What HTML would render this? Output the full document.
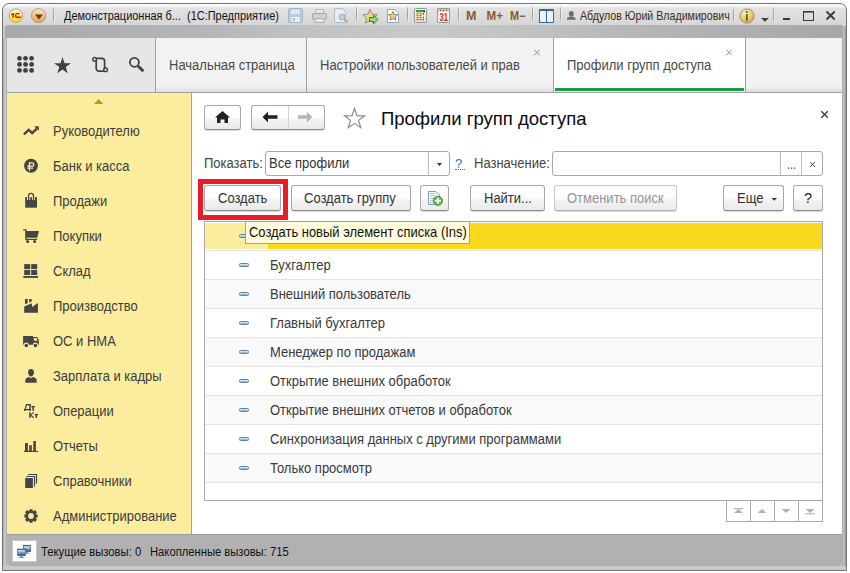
<!DOCTYPE html>
<html><head><meta charset="utf-8">
<style>
*{box-sizing:border-box;margin:0;padding:0}
html,body{width:850px;height:573px;overflow:hidden;background:#fff}
body{position:relative;font-family:"Liberation Sans",sans-serif;color:#333}
.a{position:absolute}
.t{position:absolute;white-space:nowrap;line-height:1;transform-origin:0 0}
#win{left:2px;top:3px;width:845px;height:568px;border:1px solid #737373;border-radius:7px 7px 0 0;
 background:linear-gradient(#fcfcfc 0,#f6f6f6 2px,#e2e2e2 4.5px,#dedede 10px,#d6d6d6 21px,#c9c9c9 22px,#c9c9c9 100%)}
#band{left:5px;top:25px;width:837px;height:13px;border-radius:3px 0 0 0;background:linear-gradient(90deg,#a8a9ac 0,#b4b5b7 195px,#c0c1c2 295px,#c9c9c9 420px,#c0c1c2 525px,#b5b6b8 630px,#adaeb0 745px,#a6a7aa 839px)}
#tools{left:7px;top:38px;width:149px;height:55px;background:#e6e6e6;border-right:1px solid #a0a0a0;border-bottom:1px solid #a0a0a0}
.tab{top:38px;height:55px;background:linear-gradient(#f2f2f2 0,#f2f2f2 48px,#dedede 54px);border-right:1px solid #a0a0a0;border-bottom:1px solid #a0a0a0}
#side{left:7px;top:93px;width:185px;height:441px;background:#fbec9e;border-right:1px solid #c6a725}
#content{left:192px;top:93px;width:650px;height:441px;background:#fff}
#status{left:7px;top:534px;width:835px;height:32px;background:#b1b1b1;border-top:1px solid #9c9c9c;border-bottom:1px solid #acacac;border-radius:0 0 4px 4px}
.btn{height:26px;border:1px solid #a9a9a9;border-bottom-color:#8c8c8c;border-radius:3px;background:linear-gradient(#fff 0,#fdfdfd 50%,#f3f3f3 58%,#eaeaea 100%);box-shadow:0 1px 0 rgba(0,0,0,.14)}
.row{left:205px;width:617px;height:29px;border-top:1px solid #e3e3e3}
.minus{left:239px;width:10px;height:4px;border-radius:1.5px;background:linear-gradient(#e4f2fb,#b4cde0 60%,#7d9cb6);border:1px solid #5f82a2}
</style></head><body>
<div id="win" class="a"></div>
<div id="band" class="a"></div>
<div class="a" style="left:3px;top:38px;width:4px;height:528px;background:linear-gradient(90deg,#9a9a9a,#cbcbcb 35%,#c3c3c3 65%,#a8a8ac)"></div>
<div class="a" style="left:842px;top:26px;width:4px;height:540px;background:linear-gradient(90deg,#a6a6a6,#bdbdbd 35%,#b6b6b6 65%,#8e8e8e)"></div>
<div class="t" style="left:64px;top:10px;font-size:12.3px;color:#111;transform:scaleX(0.891);">Демонстрационная б...&nbsp; (1С:Предприятие)</div>
<div class="t" style="left:579.5px;top:10px;font-size:12.3px;color:#3e2c14;transform:scaleX(0.864);">Абдулов Юрий Владимирович</div>
<div id="tools" class="a"></div>
<div class="tab a" style="left:156px;width:151px"></div>
<div class="tab a" style="left:307px;width:247px"></div>
<div class="tab a" style="left:554px;width:192px;background:#fff"></div>
<div class="tab a" style="left:746px;width:96px;border-right:0"></div>
<div class="a" style="left:555px;top:88px;width:189px;height:3px;background:#1a9b48"></div>
<div class="t" style="left:169px;top:59px;font-size:13.78px;color:#4a4a4a;transform:scaleX(0.9434);">Начальная страница</div>
<div class="t" style="left:320px;top:59px;font-size:13.78px;color:#4a4a4a;transform:scaleX(0.9434);">Настройки пользователей и прав</div>
<div class="t" style="left:567px;top:59px;font-size:13.78px;color:#4a4a4a;transform:scaleX(0.9434);">Профили групп доступа</div>
<div id="side" class="a"></div>
<div class="t" style="left:53px;top:125px;font-size:13.78px;color:#3d3d3d;transform:scaleX(0.9434);">Руководителю</div>
<div class="t" style="left:53px;top:160px;font-size:13.78px;color:#3d3d3d;transform:scaleX(0.9434);">Банк и касса</div>
<div class="t" style="left:53px;top:195px;font-size:13.78px;color:#3d3d3d;transform:scaleX(0.9434);">Продажи</div>
<div class="t" style="left:53px;top:230px;font-size:13.78px;color:#3d3d3d;transform:scaleX(0.9434);">Покупки</div>
<div class="t" style="left:53px;top:265px;font-size:13.78px;color:#3d3d3d;transform:scaleX(0.9434);">Склад</div>
<div class="t" style="left:53px;top:300px;font-size:13.78px;color:#3d3d3d;transform:scaleX(0.9434);">Производство</div>
<div class="t" style="left:53px;top:335px;font-size:13.78px;color:#3d3d3d;transform:scaleX(0.9434);">ОС и НМА</div>
<div class="t" style="left:53px;top:370px;font-size:13.78px;color:#3d3d3d;transform:scaleX(0.9434);">Зарплата и кадры</div>
<div class="t" style="left:53px;top:405px;font-size:13.78px;color:#3d3d3d;transform:scaleX(0.9434);">Операции</div>
<div class="t" style="left:53px;top:440px;font-size:13.78px;color:#3d3d3d;transform:scaleX(0.9434);">Отчеты</div>
<div class="t" style="left:53px;top:475px;font-size:13.78px;color:#3d3d3d;transform:scaleX(0.9434);">Справочники</div>
<div class="t" style="left:53px;top:510px;font-size:13.78px;color:#3d3d3d;transform:scaleX(0.9434);">Администрирование</div>
<div id="content" class="a"></div>
<div id="status" class="a"></div>
<div class="a" style="left:12px;top:540px;width:25px;height:22px;background:#fff;border:1px solid #c8c8c8"></div>
<div class="t" style="left:40.5px;top:546px;font-size:12.3px;color:#111;transform:scaleX(0.917);">Текущие вызовы: 0</div>
<div class="t" style="left:150px;top:546px;font-size:12.3px;color:#111;transform:scaleX(0.913);">Накопленные вызовы: 715</div>
<div class="btn a" style="left:204px;top:105px;width:37px;height:25px"></div>
<div class="btn a" style="left:251px;top:105px;width:74px;height:25px"></div>
<div class="a" style="left:288px;top:106px;width:1px;height:23px;background:#d2d2d2"></div>
<div class="t" style="left:381px;top:110px;font-size:18.50px;color:#0a0a0a;">Профили групп доступа</div>
<div class="t" style="left:204px;top:157px;font-size:13.78px;color:#444;transform:scaleX(0.9434);">Показать:</div>
<div class="a" style="left:265px;top:151px;width:185px;height:25px;border:1px solid #a9a9a9;border-radius:3px;background:#fff"></div>
<div class="a" style="left:428px;top:152px;width:1px;height:23px;background:#bdbdbd"></div>
<div class="t" style="left:269px;top:157px;font-size:13.78px;color:#333;transform:scaleX(0.9434);">Все профили</div>
<div class="t" style="left:455px;top:157px;font-size:13.00px;color:#1a79c2;">?</div>
<div class="a" style="left:455px;top:169px;width:10px;height:0;border-top:1px dotted #1a79c2"></div>
<div class="t" style="left:474px;top:157px;font-size:13.78px;color:#444;transform:scaleX(0.9434);">Назначение:</div>
<div class="a" style="left:552px;top:151px;width:271px;height:25px;border:1px solid #a9a9a9;border-radius:3px;background:#fff"></div>
<div class="a" style="left:780px;top:152px;width:1px;height:23px;background:#bdbdbd"></div>
<div class="a" style="left:801px;top:152px;width:1px;height:23px;background:#bdbdbd"></div>
<div class="a" style="left:198px;top:179px;width:90px;height:41px;border:5px solid #ec1c24"></div>
<div class="btn a" style="left:204px;top:185px;width:77px;"></div>
<div class="t" style="left:218px;top:192px;font-size:13.78px;color:#333;transform:scaleX(0.9434);">Создать</div>
<div class="btn a" style="left:291px;top:185px;width:120px;"></div>
<div class="t" style="left:304px;top:192px;font-size:13.78px;color:#333;transform:scaleX(0.9434);">Создать группу</div>
<div class="btn a" style="left:420px;top:185px;width:29px;"></div>
<div class="btn a" style="left:470px;top:185px;width:75px;"></div>
<div class="t" style="left:484px;top:192px;font-size:13.78px;color:#333;transform:scaleX(0.9434);">Найти...</div>
<div class="btn a" style="left:554px;top:185px;width:123px;border-color:#c6c6c6;border-bottom-color:#b0b0b0"></div>
<div class="t" style="left:567px;top:192px;font-size:13.78px;color:#959595;transform:scaleX(0.9434);">Отменить поиск</div>
<div class="btn a" style="left:723px;top:185px;width:61px;"></div>
<div class="t" style="left:737px;top:192px;font-size:13.78px;color:#333;transform:scaleX(0.9434);">Еще</div>
<div class="btn a" style="left:793px;top:185px;width:30px;"></div>
<div class="t" style="left:804px;top:191px;font-size:14.50px;color:#222;">?</div>
<div class="a" style="left:204px;top:221px;width:619px;height:280px;border:1px solid #a8a8a8;background:#fff"></div>
<div class="a" style="left:205px;top:223px;width:617px;height:26px;background:#fad81e"></div>
<div class="a" style="left:205px;top:223px;width:63px;height:26px;background:#fbec9e"></div>
<div class="row a" style="top:250px;height:29px;background:#fff"></div>
<div class="row a" style="top:279px;height:29px;background:#f9f9f9"></div>
<div class="row a" style="top:308px;height:29px;background:#fff"></div>
<div class="row a" style="top:337px;height:29px;background:#f9f9f9"></div>
<div class="row a" style="top:366px;height:29px;background:#fff"></div>
<div class="row a" style="top:395px;height:29px;background:#f9f9f9"></div>
<div class="row a" style="top:424px;height:29px;background:#fff"></div>
<div class="row a" style="top:453px;height:29px;background:#f9f9f9"></div>
<div class="row a" style="top:482px;height:18px;background:#fff"></div>
<div class="minus a" style="top:234px"></div>
<div class="minus a" style="top:263px"></div>
<div class="minus a" style="top:292px"></div>
<div class="minus a" style="top:321px"></div>
<div class="minus a" style="top:350px"></div>
<div class="minus a" style="top:379px"></div>
<div class="minus a" style="top:408px"></div>
<div class="minus a" style="top:437px"></div>
<div class="minus a" style="top:466px"></div>
<div class="t" style="left:270px;top:259px;font-size:13.78px;color:#3a3a3a;transform:scaleX(0.9434);">Бухгалтер</div>
<div class="t" style="left:270px;top:288px;font-size:13.78px;color:#3a3a3a;transform:scaleX(0.9434);">Внешний пользователь</div>
<div class="t" style="left:270px;top:317px;font-size:13.78px;color:#3a3a3a;transform:scaleX(0.9434);">Главный бухгалтер</div>
<div class="t" style="left:270px;top:346px;font-size:13.78px;color:#3a3a3a;transform:scaleX(0.9434);">Менеджер по продажам</div>
<div class="t" style="left:270px;top:375px;font-size:13.78px;color:#3a3a3a;transform:scaleX(0.9434);">Открытие внешних обработок</div>
<div class="t" style="left:270px;top:404px;font-size:13.78px;color:#3a3a3a;transform:scaleX(0.9434);">Открытие внешних отчетов и обработок</div>
<div class="t" style="left:270px;top:433px;font-size:13.78px;color:#3a3a3a;transform:scaleX(0.9434);">Синхронизация данных с другими программами</div>
<div class="t" style="left:270px;top:462px;font-size:13.78px;color:#3a3a3a;transform:scaleX(0.9434);">Только просмотр</div>
<div class="a" style="left:726px;top:501px;width:97px;height:21px;border:1px solid #a8a8a8;border-top:0;background:#fff"></div>
<div class="a" style="left:245px;top:221px;width:225px;height:23px;background:#fffbdc;border:1px solid #a8a38a"></div>
<div class="t" style="left:249px;top:226px;font-size:13.73px;color:#111;transform:scaleX(0.9434);">Создать новый элемент списка (Ins)</div>
<svg class="a" style="left:0;top:0" width="850" height="573" viewBox="0 0 850 573">
<defs>
<linearGradient id="gsep" x1="0" y1="0" x2="0" y2="1"><stop offset="0" stop-color="#a8a8a8" stop-opacity="0.2"/><stop offset="0.3" stop-color="#a0a0a0"/><stop offset="0.7" stop-color="#a0a0a0"/><stop offset="1" stop-color="#a8a8a8" stop-opacity="0.2"/></linearGradient>
<linearGradient id="g1c" x1="0" y1="0" x2="0" y2="1"><stop offset="0" stop-color="#fffbd0"/><stop offset="0.5" stop-color="#fff070"/><stop offset="1" stop-color="#f2e000"/></linearGradient>
<linearGradient id="gdd" x1="0" y1="0" x2="0" y2="1"><stop offset="0" stop-color="#fde6c0"/><stop offset="0.5" stop-color="#f8c47a"/><stop offset="1" stop-color="#f0a040"/></linearGradient>
<radialGradient id="ginfo" cx="0.4" cy="0.3" r="0.8"><stop offset="0" stop-color="#fff0c0"/><stop offset="0.6" stop-color="#f8c060"/><stop offset="1" stop-color="#e09030"/></radialGradient>
<linearGradient id="gmon" x1="0" y1="0" x2="0" y2="1"><stop offset="0" stop-color="#2a5a8a"/><stop offset="0.25" stop-color="#c8e0f4"/><stop offset="0.6" stop-color="#6a9ccc"/><stop offset="1" stop-color="#1a5090"/></linearGradient>
</defs>
<!-- title bar icons -->
<circle cx="15.9" cy="15.7" r="6.7" fill="url(#g1c)" stroke="#c09070" stroke-width="0.9"/>
<path d="M11.1 14.3l1.7-1.4h1.1v4.8h-1.5v-2.8l-1.3.6z" fill="#e8120c"/>
<path d="M19.4 14.1a2.2 2.2 0 1 0-3.1 3.1h4.6" fill="none" stroke="#e8120c" stroke-width="1.35"/>
<circle cx="38.6" cy="15.6" r="7.1" fill="url(#gdd)" stroke="#8a9099" stroke-width="0.8"/>
<path d="M34.9 14.6h8.1l-4.05 5z" fill="#4e4434"/>
<rect x="53.0" y="6" width="1" height="17" fill="url(#gsep)"/><rect x="54.0" y="6" width="1" height="17" fill="#f4f4f4" opacity="0.6"/>
<!-- floppy -->
<rect x="288.5" y="8.5" width="14" height="14" rx="1" fill="#b9cbdc" stroke="#a0b6ca"/>
<rect x="291" y="9.5" width="9" height="4.5" fill="#dfe8f0"/>
<rect x="291.5" y="17" width="8" height="5" fill="#f0f0f0"/>
<rect x="293" y="18" width="2" height="3" fill="#a5bacd"/>
<!-- printer -->
<rect x="315.5" y="9.5" width="8" height="5" fill="#dde6ee" stroke="#b8c4cc"/>
<rect x="312.5" y="13.5" width="14" height="6" rx="1.5" fill="#d6d0ca" stroke="#aaa29a"/>
<rect x="315" y="18.5" width="9" height="4" fill="#e6e6e6" stroke="#b0b0b0"/>
<!-- preview -->
<path d="M334.5 8.5h8l3 3v11h-11z" fill="#e6eef6" stroke="#a9bfd3"/>
<circle cx="342" cy="17" r="3" fill="#bcd0e4" stroke="#c4a890"/>
<line x1="344" y1="19" x2="347.5" y2="22.5" stroke="#c4a890" stroke-width="2"/>
<rect x="356.0" y="6" width="1" height="16" fill="url(#gsep)"/><rect x="357.0" y="6" width="1" height="16" fill="#f4f4f4" opacity="0.6"/>
<!-- star arrow -->
<path d="M370 9.5l2.2 4.6 5 .6-3.7 3.4 1 5-4.5-2.5-4.5 2.5 1-5-3.7-3.4 5-.6z" fill="#fbcf80" stroke="#8a8580" stroke-width="0.9"/>
<path d="M369.5 17.5h4v-2.2l4.6 4.2-4.6 4.2v-2.2h-4z" fill="#90dc78" stroke="#2a8020" stroke-width="0.9"/>
<!-- doc star -->
<path d="M387.5 9.5h7.5l3.5 3.5v9.5h-11z" fill="#fbfdff" stroke="#8aa6c0"/>
<path d="M393 11.5l1.4 2.9 3.2.4-2.3 2.2.6 3.1-2.9-1.6-2.9 1.6.6-3.1-2.3-2.2 3.2-.4z" fill="#f8c868" stroke="#6a6050" stroke-width="0.7"/>
<rect x="407.0" y="6" width="1" height="16" fill="url(#gsep)"/><rect x="408.0" y="6" width="1" height="16" fill="#f4f4f4" opacity="0.6"/>
<!-- calculator -->
<defs><linearGradient id="gbeige" x1="0" y1="0" x2="0" y2="1"><stop offset="0" stop-color="#fff6e6"/><stop offset="1" stop-color="#f8dcb0"/></linearGradient></defs>
<rect x="414.5" y="8.5" width="12" height="14" rx="0.8" fill="url(#gbeige)" stroke="#8e9aa4"/>
<rect x="416" y="10" width="9" height="2.2" fill="#3c9a2c"/><rect x="423.6" y="10" width="1.4" height="2.2" fill="#2a4a20"/>
<g fill="#4a4a4a"><rect x="416.6" y="13.2" width="1.8" height="1"/><rect x="419.6" y="13.2" width="1.8" height="1"/>
<rect x="416.6" y="15.2" width="1.8" height="1"/><rect x="419.6" y="15.2" width="1.8" height="1"/>
<rect x="416.6" y="17.2" width="1.8" height="1"/><rect x="419.6" y="17.2" width="1.8" height="1"/>
<rect x="416.6" y="19.2" width="1.8" height="1"/><rect x="419.6" y="19.2" width="1.8" height="1"/>
<rect x="422.8" y="16.8" width="1.2" height="1.2"/><rect x="422.8" y="18.8" width="1.2" height="1.6"/></g>
<rect x="422.8" y="13" width="1.2" height="2" fill="#e03020"/>
<!-- calendar -->
<rect x="437.5" y="8.5" width="12" height="14" rx="0.5" fill="#fdf6ec" stroke="#8e9aa4"/>
<rect x="438" y="9" width="11" height="2.6" fill="#e8c890"/>
<g fill="#3a3020"><rect x="440" y="9.8" width="1" height="1"/><rect x="443" y="9.8" width="1" height="1"/><rect x="446" y="9.8" width="1" height="1"/></g>
<text x="439.5" y="20.9" font-family="Liberation Sans" font-weight="bold" font-size="10" fill="#e8261c" textLength="8.4" lengthAdjust="spacingAndGlyphs">31</text>
<rect x="458.0" y="6" width="1" height="16" fill="url(#gsep)"/><rect x="459.0" y="6" width="1" height="16" fill="#f4f4f4" opacity="0.6"/>
<text x="466" y="20.4" font-family="Liberation Sans" font-weight="bold" font-size="12" fill="#8a5a2c" textLength="10.5" lengthAdjust="spacingAndGlyphs">M</text>
<text x="486.5" y="20.4" font-family="Liberation Sans" font-weight="bold" font-size="12" fill="#8a5a2c" textLength="16.5" lengthAdjust="spacingAndGlyphs">M+</text>
<text x="510" y="20.4" font-family="Liberation Sans" font-weight="bold" font-size="12" fill="#8a5a2c" textLength="15.5" lengthAdjust="spacingAndGlyphs">M−</text>
<rect x="532.0" y="6" width="1" height="16" fill="url(#gsep)"/><rect x="533.0" y="6" width="1" height="16" fill="#f4f4f4" opacity="0.6"/>
<!-- panel -->
<rect x="539.5" y="9.5" width="14" height="13" fill="#eaf2fa" stroke="#2f6aa8"/>
<rect x="539.5" y="9.5" width="14" height="1.5" fill="#2f6aa8"/>
<line x1="546.5" y1="10" x2="546.5" y2="22" stroke="#2f6aa8"/>
<rect x="560.0" y="6" width="1" height="16" fill="url(#gsep)"/><rect x="561.0" y="6" width="1" height="16" fill="#f4f4f4" opacity="0.6"/>
<!-- user -->
<ellipse cx="571.3" cy="13.8" rx="2.5" ry="2.8" fill="#6e6e6e"/>
<path d="M566.8 19.8c0-2.5 2-3.4 4.5-3.4s4.5.9 4.5 3.4z" fill="#6e6e6e"/>
<rect x="733.0" y="6" width="1" height="17" fill="url(#gsep)"/><rect x="734.0" y="6" width="1" height="17" fill="#f4f4f4" opacity="0.6"/>
<circle cx="747" cy="16" r="7.1" fill="url(#ginfo)" stroke="#8a8070" stroke-width="0.8"/>
<rect x="745.9" y="14.1" width="1.8" height="6.7" fill="#1e7a18"/>
<circle cx="746.8" cy="12" r="1.05" fill="#1e7a18"/>
<path d="M761 17.9h7.8l-3.9 3.8z" fill="#3a3a3a"/>
<rect x="773.0" y="6" width="1" height="17" fill="url(#gsep)"/><rect x="774.0" y="6" width="1" height="17" fill="#f4f4f4" opacity="0.6"/>
<rect x="783" y="18" width="7" height="2" fill="#3a3a3a"/>
<rect x="803.5" y="11.5" width="10" height="9" fill="none" stroke="#3a3a3a"/>
<rect x="803" y="11" width="11" height="1.6" fill="#3a3a3a"/>
<path d="M826.5 11.5l8.2 8M834.7 11.5l-8.2 8" stroke="#3a3a3a" stroke-width="1.75"/>

<!-- tab close -->
<path d="M534.3 49.8l5.4 5.4M539.7 49.8l-5.4 5.4" stroke="#8c8c8c" stroke-width="1"/>
<path d="M726.3 49.8l5.4 5.4M731.7 49.8l-5.4 5.4" stroke="#8c8c8c" stroke-width="1"/>
<!-- toolbar icons -->
<g fill="#404040">
<circle cx="19.5" cy="58.3" r="2.4"/><circle cx="25.5" cy="58.3" r="2.4"/><circle cx="31.6" cy="58.3" r="2.4"/>
<circle cx="19.5" cy="64.4" r="2.4"/><circle cx="25.5" cy="64.4" r="2.4"/><circle cx="31.6" cy="64.4" r="2.4"/>
<circle cx="19.5" cy="70.4" r="2.4"/><circle cx="25.5" cy="70.4" r="2.4"/><circle cx="31.6" cy="70.4" r="2.4"/>
<path d="M62.5 57l2 6.2h6.5l-5.3 3.8 2 6.2-5.2-3.8-5.2 3.8 2-6.2-5.3-3.8h6.5z"/>
</g>
<path d="M94.6 58.3h7.2a2.8 2.8 0 0 1 2.8 2.8v8.6M96.2 59.4v9a2.8 2.8 0 0 0 2.8 2.8h6.6" fill="none" stroke="#404040" stroke-width="1.7"/>
<circle cx="94.6" cy="59.3" r="1.85" fill="#e6e6e6" stroke="#404040" stroke-width="1.4"/>
<circle cx="105.6" cy="69.8" r="1.85" fill="#e6e6e6" stroke="#404040" stroke-width="1.4"/>
<circle cx="134.4" cy="62.3" r="4.5" fill="none" stroke="#404040" stroke-width="1.8"/>
<path d="M138 65.9l5.4 5.4" stroke="#404040" stroke-width="2.8"/>

<!-- sidebar triangle -->
<path d="M94 103.9H103.3L98.65 98.9Z" fill="#b8981a"/>
<!-- sidebar icons -->
<g fill="#454545">
<path d="M23.9 134.3l4.8-4.5 3.5 3.3 4.6-4.5" fill="none" stroke="#454545" stroke-width="2.3"/>
<path d="M34.2 126.2h4.6v4.6z"/>
<circle cx="31" cy="165.75" r="6.95"/><path d="M29.45 170.8V162.95h2.75a1.6 1.6 0 0 1 0 3.2H27.3M27.3 168.15h5.8" fill="none" stroke="#fbec9e" stroke-width="1.3"/>
<path d="M25.2 207.7V197.1H37V207.7Z"/>
<path d="M28.6 196.5V199.9M33.5 196.5V199.9" stroke="#fbec9e" stroke-width="3.1"/>
<path d="M28.6 199.9V195.8A2.45 2.45 0 0 1 33.5 195.8V199.9" fill="none" stroke="#454545" stroke-width="1.3"/>
<path d="M23.2 229.8H25.9V239.4H37.2" fill="none" stroke="#454545" stroke-width="1.2"/>
<path d="M25.6 230.9H38.9L37.3 237.7H25.6Z"/>
<circle cx="27.6" cy="241.5" r="1.55"/><circle cx="34.6" cy="241.5" r="1.55"/>
<rect x="24.2" y="264.1" width="6" height="5"/><rect x="31.2" y="264.1" width="6" height="5"/>
<rect x="24.2" y="270" width="6" height="5"/><rect x="31.2" y="270" width="6" height="5"/>
<rect x="23.3" y="276" width="14.7" height="1.9"/>
<path d="M24.2 312.7V306.5L31.7 303.3L32.3 307.1L37.9 303.1V312.7Z"/>
<path d="M25 299H27.7V303.1L25 304.3Z"/><path d="M29.2 299H31.7V301.5L29.2 302.6Z"/>
<path d="M23.1 336H33V344.8H29A2.75 2.75 0 0 0 23.6 344.8H23.1Z"/>
<path d="M33 337.1H37.2L38.8 339.9V344.8H38.1A2.75 2.75 0 0 0 32.7 344.8H33Z"/>
<path d="M33.8 338H36.6L37.5 340.8H33.8Z" fill="#fbec9e"/>
<circle cx="26.3" cy="345.6" r="1.75"/><circle cx="35.4" cy="345.6" r="1.75"/>
<path d="M28.1 372.2C28.1 369.7 29.4 369 31 369S33.9 369.7 33.9 372.2C33.9 374.6 32.5 376.6 31 376.6S28.1 374.6 28.1 372.2Z"/>
<path d="M25.3 382.7V380.1C25.3 378.6 27 377.6 29.1 377.1L31 378.3L32.9 377.1C35 377.6 36.7 378.6 36.7 380.1V382.7Z"/>
<g fill="#3a3a3a"><rect x="26" y="404" width="4.8" height="1.3"/><rect x="29.3" y="404" width="1.4" height="6.2"/>
<rect x="24" y="409" width="7" height="1.25"/><rect x="24" y="409" width="1.2" height="1.9"/><rect x="29.7" y="409" width="1.2" height="1.9"/>
<rect x="31.4" y="406" width="3.4" height="1.25"/><rect x="32.4" y="406" width="1.4" height="4.9"/>
<rect x="29.2" y="412.3" width="1.4" height="5.6"/>
<rect x="34.7" y="414" width="3.2" height="1.25"/><rect x="35.6" y="414" width="1.4" height="3.9"/></g>
<path d="M26.4 405l-1.3 4.2M30.6 415.1l3-2.8M30.6 415.1l3.2 2.8" stroke="#3a3a3a" stroke-width="1.1" fill="none"/>
</g><g fill="#454545">
<rect x="25" y="443.1" width="2.9" height="8.3"/><rect x="29.2" y="445.2" width="2.6" height="6.2"/><rect x="33.3" y="441" width="2.6" height="10.4"/>
<rect x="24" y="450.9" width="14" height="1.1"/>
<rect x="25.2" y="478" width="7.7" height="10"/>
<path d="M26.2 476.5h8.3v10.3M28.1 474.5h8.4v9.3" fill="none" stroke="#454545" stroke-width="1.15"/>
</g>
<path fill="#454545" d="M29.27 510.99 L29.47 509.37 L32.53 509.37 L32.73 510.99 L33.32 511.24 L34.76 509.98 L37.02 512.24 L35.76 513.68 L36.01 514.27 L37.63 514.47 L37.63 517.53 L36.01 517.73 L35.76 518.32 L37.02 519.76 L34.76 522.02 L33.32 520.76 L32.73 521.01 L32.53 522.63 L29.47 522.63 L29.27 521.01 L28.68 520.76 L27.24 522.02 L24.98 519.76 L26.24 518.32 L25.99 517.73 L24.37 517.53 L24.37 514.47 L25.99 514.27 L26.24 513.68 L24.98 512.24 L27.24 509.98 L28.68 511.24Z"/><circle cx="31" cy="516" r="2.9" fill="#fbec9e"/>

<!-- status icon -->
<rect x="23.2" y="545.2" width="7.6" height="6.4" fill="url(#gmon)" stroke="#4a4a4a" stroke-width="0.6"/>
<rect x="26" y="551.8" width="2" height="1.4" fill="#888"/><rect x="25" y="553.2" width="4.5" height="0.8" fill="#999"/>
<rect x="17.6" y="549" width="7.8" height="6.6" fill="url(#gmon)" stroke="#4a4a4a" stroke-width="0.6"/>
<rect x="20.5" y="555.8" width="2" height="1.3" fill="#777"/><rect x="18.6" y="557.1" width="6" height="0.9" fill="#888"/>
<!-- home -->
<path d="M215 117.5l7.5-6.5 7.5 6.5h-2v5.5h-3.5v-3.5h-4v3.5h-3.5v-5.5z" fill="#222"/>
<!-- back -->
<path d="M262.5 117l5.5-5.3v3.6h9.5v3.5h-9.5v3.6z" fill="#222"/>
<path d="M312.3 117l-5.5-5.3v3.6h-8.8v3.5h8.8v3.6z" fill="#b4b4b4"/>
<!-- big star -->
<path d="M354.50 108.50 L356.99 115.67 L364.58 115.82 L358.53 120.41 L360.73 127.68 L354.50 123.34 L348.27 127.68 L350.47 120.41 L344.42 115.82 L352.01 115.67Z" fill="none" stroke="#858585" stroke-width="1.15" stroke-linejoin="miter"/>
<!-- close -->
<path d="M821.3 111.3l6.5 6.5M827.8 111.3l-6.5 6.5" stroke="#333" stroke-width="1.25"/>
<!-- select arrow -->
<path d="M436.8 163h5.3l-2.65 3z" fill="#333"/>
<!-- ... and x -->
<g fill="#444"><rect x="788" y="167.5" width="1.3" height="1.3"/><rect x="791" y="167.5" width="1.3" height="1.3"/><rect x="794" y="167.5" width="1.3" height="1.3"/></g>
<path d="M810.2 162l4.8 4.8M815 162l-4.8 4.8" stroke="#444" stroke-width="1"/>
<!-- doc plus -->
<path d="M428.5 191.5h7.5l3.5 3.5v9.5h-11z" fill="#f6f9fc" stroke="#7f9ebc"/>
<g stroke="#a9bccd" stroke-width="0.9"><line x1="430" y1="193.5" x2="435" y2="193.5"/><line x1="430" y1="195.5" x2="435" y2="195.5"/><line x1="430" y1="198.5" x2="434" y2="198.5"/><line x1="430" y1="200.5" x2="433" y2="200.5"/><line x1="430" y1="202.5" x2="433" y2="202.5"/></g>
<circle cx="437.9" cy="200.8" r="4.6" fill="#5cb848" stroke="#3a8a2a" stroke-width="0.8"/>
<path d="M437.9 197.8v6M434.9 200.8h6" stroke="#fff" stroke-width="2"/>
<!-- еще arrow -->
<path d="M771.5 198h5.5l-2.75 2.8z" fill="#333"/>
<!-- nav -->
<g stroke="#a8a8a8"><line x1="750.5" y1="500" x2="750.5" y2="522"/><line x1="774.5" y1="500" x2="774.5" y2="522"/><line x1="798.5" y1="500" x2="798.5" y2="522"/></g>
<g fill="#b0b0b0">
<rect x="734" y="508" width="9" height="1.2"/><path d="M734 513h9l-4.5-4z"/>
<path d="M757.5 513h9l-4.5-4z"/>
<path d="M781.5 509h9l-4.5 4z"/>
<path d="M805.5 509h9l-4.5 4z"/><rect x="805.5" y="513.2" width="9" height="1.2"/>
</g>
</svg>
</body></html>
